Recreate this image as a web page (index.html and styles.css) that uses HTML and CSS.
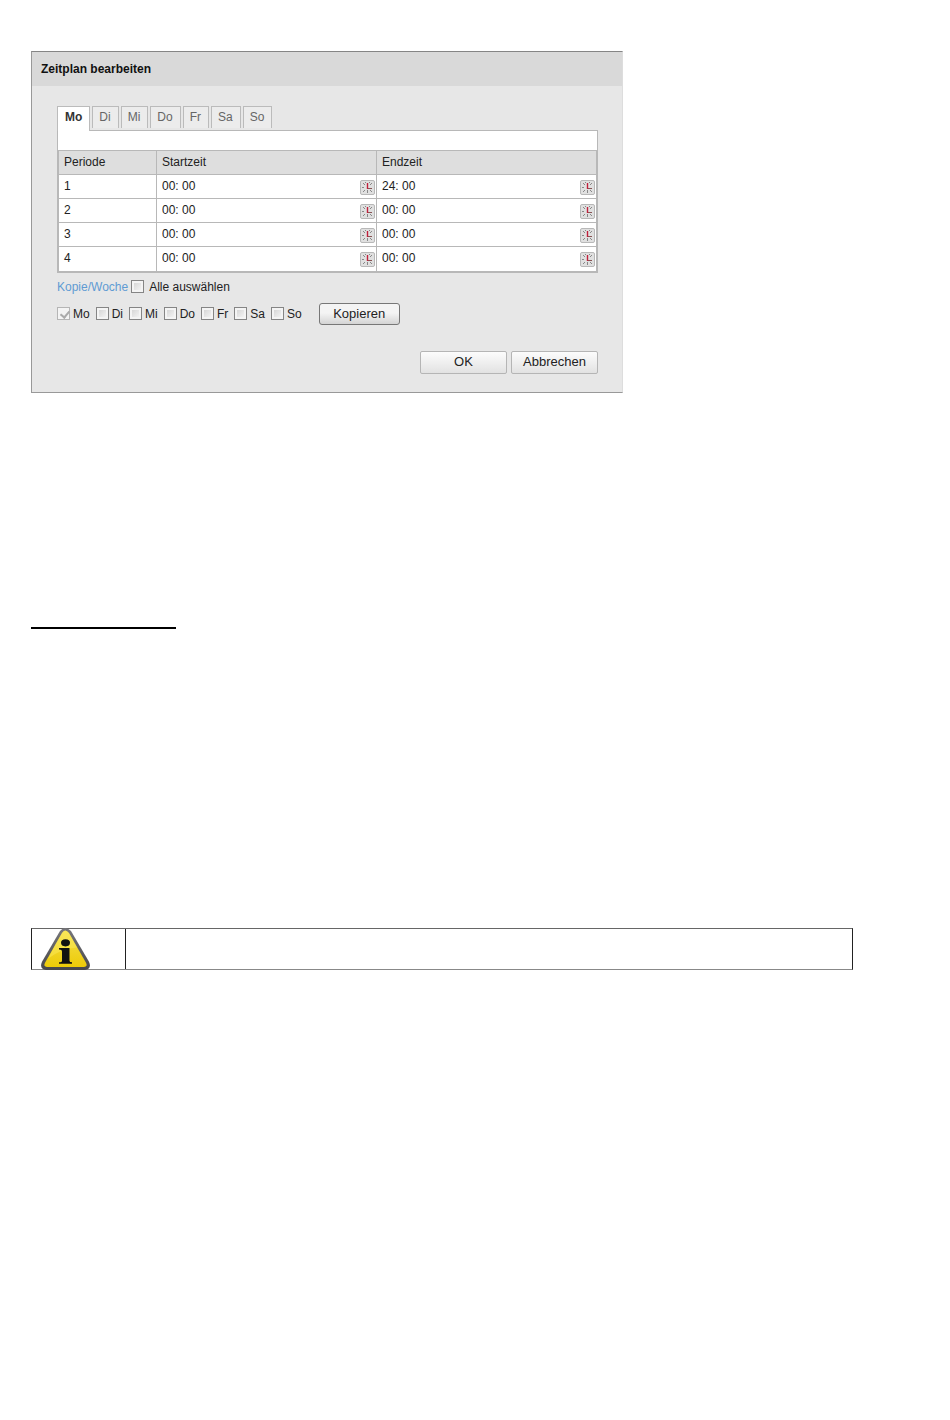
FILE: index.html
```html
<!DOCTYPE html>
<html lang="de">

<head>
	<meta charset="UTF-8">
	<title>Zeitplan bearbeiten</title>
	<link rel="stylesheet" href="styles.css">
</head>

<body>
	<!-- icons used several times -->
	<svg class="symbols" aria-hidden="true">
		<symbol id="clock" viewBox="0 0 13 13">
			<path d="M2 2l2 2M11 2l-2 2M1 6.500h2M2 11l2-2M11 11l-2-2M6.500 9v3M4.500 1v1M8.500 1v1" fill="none" stroke="#888" stroke-width="1" />
			<path d="M7 7.500h4" fill="none" stroke="#855" stroke-width="1" />
			<path d="M6.500 2v6" fill="none" stroke="#c0203c" stroke-width="1.400" />
		</symbol>
	</svg>

	<form class="dialog">
		<h1 class="dialog-title">Zeitplan bearbeiten</h1>
		<div class="dialog-body">
			<div class="tabs">
				<button type="button" class="tab active">Mo</button>
				<button type="button" class="tab">Di</button>
				<button type="button" class="tab">Mi</button>
				<button type="button" class="tab">Do</button>
				<button type="button" class="tab">Fr</button>
				<button type="button" class="tab">Sa</button>
				<button type="button" class="tab">So</button>
			</div>

			<div class="panel">
				<table class="schedule">
					<thead>
						<tr>
							<th class="col-period">Periode</th>
							<th>Startzeit</th>
							<th>Endzeit</th>
						</tr>
					</thead>
					<tbody>
						<tr>
							<td>1</td>
							<td><div class="time"><input type="text" value="00: 00" aria-label="Startzeit 1"><button type="button" class="clock" aria-label="Startzeit 1"><svg><use href="#clock" /></svg></button></div></td>
							<td><div class="time"><input type="text" value="24: 00" aria-label="Endzeit 1"><button type="button" class="clock" aria-label="Endzeit 1"><svg><use href="#clock" /></svg></button></div></td>
						</tr>
						<tr>
							<td>2</td>
							<td><div class="time"><input type="text" value="00: 00" aria-label="Startzeit 2"><button type="button" class="clock" aria-label="Startzeit 2"><svg><use href="#clock" /></svg></button></div></td>
							<td><div class="time"><input type="text" value="00: 00" aria-label="Endzeit 2"><button type="button" class="clock" aria-label="Endzeit 2"><svg><use href="#clock" /></svg></button></div></td>
						</tr>
						<tr>
							<td>3</td>
							<td><div class="time"><input type="text" value="00: 00" aria-label="Startzeit 3"><button type="button" class="clock" aria-label="Startzeit 3"><svg><use href="#clock" /></svg></button></div></td>
							<td><div class="time"><input type="text" value="00: 00" aria-label="Endzeit 3"><button type="button" class="clock" aria-label="Endzeit 3"><svg><use href="#clock" /></svg></button></div></td>
						</tr>
						<tr>
							<td>4</td>
							<td><div class="time"><input type="text" value="00: 00" aria-label="Startzeit 4"><button type="button" class="clock" aria-label="Startzeit 4"><svg><use href="#clock" /></svg></button></div></td>
							<td><div class="time"><input type="text" value="00: 00" aria-label="Endzeit 4"><button type="button" class="clock" aria-label="Endzeit 4"><svg><use href="#clock" /></svg></button></div></td>
						</tr>
					</tbody>
				</table>
			</div>

			<div class="copy-all">
				<span class="copy-title">Kopie/Woche</span>
				<input type="checkbox" id="all">
				<label for="all">Alle auswählen</label>
			</div>

			<div class="copy-days">
				<label><input type="checkbox" checked disabled>Mo</label>
				<label><input type="checkbox">Di</label>
				<label><input type="checkbox">Mi</label>
				<label><input type="checkbox">Do</label>
				<label><input type="checkbox">Fr</label>
				<label><input type="checkbox">Sa</label>
				<label><input type="checkbox">So</label>
				<button type="button" class="copy-button">Kopieren</button>
			</div>

			<div class="button-container">
				<button type="submit">OK</button>
				<button type="button">Abbrechen</button>
			</div>
		</div>
	</form>

	<hr class="rule">

	<div class="notice">
		<div class="notice-icon">
			<svg width="50" height="42" viewBox="0 0 50 41" preserveAspectRatio="none" aria-hidden="true">
				<defs>
					<linearGradient id="yellow" x1="0" y1="0" x2="0" y2="1">
						<stop offset="0" stop-color="#f3df4c" />
						<stop offset="1" stop-color="#edcb08" />
					</linearGradient>
					<linearGradient id="frame" x1="0" y1="0" x2="0" y2="1">
						<stop offset="0" stop-color="#77777c" />
						<stop offset="1" stop-color="#48484b" />
					</linearGradient>
				</defs>
				<path d="M19 3Q24-3 30 3L48 33Q51 40 44 41H5Q-2 40 1 33Z" fill="url(#frame)" />
				<path d="M21 5Q24 0 28 5L45 34Q47 38 43 38H6Q2 38 4 34Z" fill="url(#yellow)" />
				<path d="M15 15L21 5Q24 0 28 5L36 19Q20 20 7 30Z" fill="#fff06a" opacity=".4" />
				<ellipse cx="24.500" cy="14.500" rx="4.500" ry="3.500" fill="#111" />
				<path d="M18 19.500h10.500v12.500q0 1.500 2.500 1.500v1.500H18v-1.500q3 0 3-1.500v-9q0-2-3-2Z" fill="#111" />
			</svg>
		</div>
		<div class="notice-text"></div>
	</div>
</body>

</html>
```
FILE: styles.css
```css
* {
	box-sizing: border-box;
}

body {
	background-color: white;
	color: #222;
	font-family: "Liberation Sans", Arial, sans-serif;
	font-size: 12px;
	margin: 0;
	padding: 51px 97px 0 31px;
}

button,
input {
	font-family: inherit;
	color: inherit;
}

.symbols {
	display: none;
}

.dialog {
	max-width: 592px;
	background-color: #e7e7e7;
	border: 1px solid #999;
	border-top-color: #858585;
	border-right-color: #ddd;
}

.dialog-title {
	margin: 0;
	padding: 0 9px;
	font-size: 12px;
	line-height: 34px;
	color: #111;
	background-color: #d9d9d9;
}

.dialog-body {
	padding: 20px 24px 18px 25px;
}

.tabs {
	display: flex;
	align-items: flex-start;
	gap: 2px;
	height: 24px;
}

.tab {
	height: 22px;
	padding: 0 7px 2px 6px;
	font-size: 12px;
	color: #666;
	background-color: #ececec;
	border: 1px solid #bbb;
	border-bottom: none;
}

.tab.active {
	height: 25px;
	padding: 0 7px 5px;
	font-weight: bold;
	color: #333;
	background-color: white;
	z-index: 1;
}

.panel {
	padding-top: 19px;
	background-color: white;
	border: 1px solid #b8b8b8;
	border-bottom-width: 2px;
}

.schedule {
	width: 100%;
	table-layout: fixed;
	border-collapse: collapse;
}

.schedule th,
.schedule td {
	height: 24px;
	padding: 0 0 2px 5px;
	text-align: left;
	font-weight: normal;
	border: 1px solid #b8b8b8;
}

.schedule tr:last-child td {
	border-bottom: none;
}

.schedule th {
	background-color: #dedede;
}

.schedule .col-period {
	width: 98px;
}

.time {
	display: flex;
	align-items: center;
	height: 21px;
	padding-right: 1px;
}

.time input {
	flex: 1;
	min-width: 0;
	padding: 0;
	font-size: 12px;
	border: none;
	background: none;
	outline: none;
}

.clock {
	display: flex;
	width: 15px;
	height: 15px;
	margin-top: 4px;
	padding: 0;
	background-color: #e0e0e0;
	border: 1px solid #b8b8b8;
	border-radius: 2px;
}

.clock svg {
	width: 13px;
	height: 13px;
}

.copy-all,
.copy-days {
	display: flex;
	align-items: center;
}

.copy-all {
	gap: 3px;
	margin-top: 6px;
	height: 16px;
}

.copy-all label {
	padding-left: 2px;
}

.copy-title {
	color: #5f9bd3;
}

.copy-days {
	gap: 6px;
	margin-top: 8px;
}

.copy-days label {
	display: flex;
	align-items: center;
	gap: 3px;
}

input[type="checkbox"] {
	appearance: none;
	width: 13px;
	height: 13px;
	margin: 0;
	background: linear-gradient(135deg, #cfcfcf, #fafafa);
	border: 1px solid #858585;
	box-shadow: inset 0 0 0 2px #f4f4f4;
}

input[type="checkbox"]:disabled {
	background: #f2f2f2;
	border-color: #b5b5b5;
}

input[type="checkbox"]:checked::before {
	content: "";
	display: block;
	width: 4px;
	height: 7px;
	margin: 1px 0 0 4px;
	border: solid #aaa;
	border-width: 0 2px 2px 0;
	transform: rotate(40deg);
}

.copy-button {
	width: 81px;
	height: 22px;
	margin-left: 11px;
	padding: 0;
	font-size: 13px;
	background: linear-gradient(#f4f4f4 45%, #d4d4d4);
	border: 1px solid #777;
	border-radius: 3px;
}

.button-container {
	display: flex;
	justify-content: flex-end;
	gap: 4px;
	margin-top: 26px;
}

.button-container button {
	width: 87px;
	height: 23px;
	padding: 0 0 2px;
	font-size: 13px;
	background: linear-gradient(#fcfcfc, #e2e2e2);
	border: 1px solid #b5b5b5;
	border-radius: 2px;
}

.rule {
	width: 145px;
	height: 2px;
	margin: 234px 0 0;
	border: none;
	background-color: black;
}

.notice {
	display: flex;
	margin-top: 299px;
	border: 1px solid #222;
	border-top-color: #666;
	border-bottom-color: #888;
}

.notice-icon {
	width: 94px;
	height: 40px;
	padding-left: 9px;
	border-right: 1px solid #222;
}

.notice-icon svg {
	display: block;
	margin-top: -1px;
}

.notice-text {
	flex: 1;
}
```
